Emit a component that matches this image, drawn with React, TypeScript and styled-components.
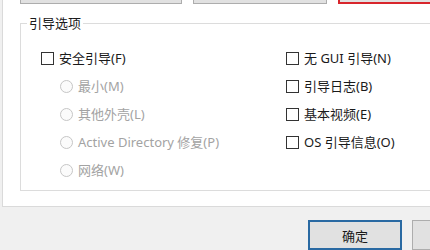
import React from "react";
import styled, { createGlobalStyle } from "styled-components";

const Global = createGlobalStyle`
  html, body { margin: 0; padding: 0; background: #f0f0f0; }
  body { font-family: "Noto Sans", "Noto Sans CJK SC", sans-serif; }
`;

const Screen = styled.div`
  width: 430px;
  height: 250px;
  overflow: hidden;
  background: #f0f0f0;
  display: flex;
  flex-direction: column;
  font-family: "Noto Sans", "Noto Sans CJK SC", sans-serif;
  font-size: 13px;
  color: #1a1a1a;
`;

const Panel = styled.div`
  margin-left: 2px;
  width: 450px;
  height: 206px;
  flex: none;
  background: #ffffff;
  border-left: 1px solid #dadada;
  border-bottom: 1px solid #dadada;
  box-sizing: content-box;
  display: flex;
  flex-direction: column;
`;

const TopRow = styled.div`
  height: 4px;
  overflow: hidden;
  display: flex;
  align-items: flex-end;
  padding-left: 17px;
  gap: 11px;
`;

const TopButton = styled.div<{ $w: number; $danger?: boolean }>`
  flex: none;
  width: ${(p) => p.$w}px;
  height: 24px;
  box-sizing: border-box;
  background: #e1e1e1;
  border: ${(p) => (p.$danger ? "2px solid #d8262c" : "1px solid #adadad")};
`;

const Group = styled.fieldset`
  margin: 10px 0 0 17px;
  padding: 0 0 0 6px;
  width: 440px;
  height: 177px;
  box-sizing: border-box;
  border: 1px solid #dcdcdc;
  display: flex;
`;

const Legend = styled.legend`
  padding: 0 2px;
  font-size: 13px;
  line-height: 18px;
  color: #1a1a1a;
`;

const Columns = styled.div`
  display: grid;
  grid-template-columns: 245px 160px;
  padding-top: 12px;
  padding-left: 14px;
`;

const Column = styled.div`
  display: grid;
  grid-auto-rows: 28px;
  align-content: start;
`;

const Row = styled.div<{ $indent?: boolean; $disabled?: boolean }>`
  display: flex;
  align-items: center;
  gap: 5px;
  padding-left: ${(p) => (p.$indent ? "19px" : "0")};
  color: ${(p) => (p.$disabled ? "#a3a3a3" : "#1a1a1a")};
  white-space: nowrap;
  line-height: 18px;
`;

const CheckBox = styled.span`
  flex: none;
  width: 13px;
  height: 13px;
  box-sizing: border-box;
  border: 1px solid #333333;
  background: #ffffff;
`;

const Radio = styled.span`
  flex: none;
  width: 13px;
  height: 13px;
  box-sizing: border-box;
  border: 1px solid #c6c6c6;
  border-radius: 50%;
  background: #fbfbfb;
`;

const Footer = styled.div`
  display: flex;
  justify-content: flex-start;
  gap: 10px;
  padding: 13px 0 0 308px;
`;

const DlgButton = styled.div<{ $primary?: boolean }>`
  flex: none;
  width: 94px;
  height: 30px;
  box-sizing: border-box;
  background: #e1e1e1;
  border: ${(p) => (p.$primary ? "2px solid #2a6aa3" : "1px solid #adadad")};
  display: flex;
  align-items: center;
  justify-content: center;
  font-size: 13px;
  color: #1a1a1a;
`;

const leftItems = [
  { label: "安全引导(F)", kind: "check" },
  { label: "最小(M)", kind: "radio" },
  { label: "其他外壳(L)", kind: "radio" },
  { label: "Active Directory 修复(P)", kind: "radio" },
  { label: "网络(W)", kind: "radio" },
];

const rightItems = ["无 GUI 引导(N)", "引导日志(B)", "基本视频(E)", "OS 引导信息(O)"];

export default function App() {
  return (
    <>
      <Global />
      <Screen>
        <Panel>
          <TopRow>
            <TopButton $w={162} />
            <TopButton $w={134} />
            <TopButton $w={120} $danger />
          </TopRow>
          <Group>
            <Legend>引导选项</Legend>
            <Columns>
              <Column>
                {leftItems.map((it) =>
                  it.kind === "check" ? (
                    <Row key={it.label}>
                      <CheckBox />
                      {it.label}
                    </Row>
                  ) : (
                    <Row key={it.label} $indent $disabled>
                      <Radio />
                      {it.label}
                    </Row>
                  )
                )}
              </Column>
              <Column>
                {rightItems.map((l) => (
                  <Row key={l}>
                    <CheckBox />
                    {l}
                  </Row>
                ))}
              </Column>
            </Columns>
          </Group>
        </Panel>
        <Footer>
          <DlgButton $primary>确定</DlgButton>
          <DlgButton />
        </Footer>
      </Screen>
    </>
  );
}
